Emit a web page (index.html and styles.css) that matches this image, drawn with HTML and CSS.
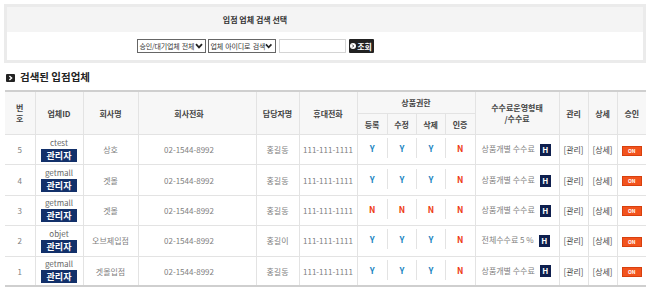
FILE: index.html
```html
<!DOCTYPE html>
<html>
<head>
    <meta charset="utf-8">
    <link rel="stylesheet" href="styles.css">
</head>
<body>
    <div class="search-box">
        <div class="search-head">입점 업체 검색 선택</div>
        <div class="search-body">
            <div class="select sel-state">
                <span>승인/대기업체 전체</span>
                <svg width="8" height="6" viewBox="0 0 8 6"><path d="M1 1.2 L4 4.4 L7 1.2" fill="none" stroke="#222" stroke-width="1.8"/></svg>
            </div>
            <div class="select sel-field">
                <span>업체 아이디로 검색</span>
                <svg width="8" height="6" viewBox="0 0 8 6"><path d="M1 1.2 L4 4.4 L7 1.2" fill="none" stroke="#222" stroke-width="1.8"/></svg>
            </div>
            <div class="keyword"></div>
            <div class="btn-search">
                <svg width="6" height="6" viewBox="0 0 6 6"><circle cx="3" cy="3" r="3" fill="#fff"/><path d="M2.3 1.6 L3.7 3 L2.3 4.4" fill="none" stroke="#222" stroke-width="0.9"/></svg>
                <span>조회</span>
            </div>
        </div>
    </div>

    <div class="list-title">
        <svg width="9" height="8" viewBox="0 0 9 8"><rect width="9" height="8" rx="1" fill="#222"/><path d="M3.4 2 L5.6 4 L3.4 6" fill="none" stroke="#fff" stroke-width="1.4"/></svg>
        <span>검색된 입점업체</span>
    </div>

    <table class="list">
        <colgroup>
            <col style="width:30px"><col style="width:48px"><col style="width:55px"><col style="width:118px">
            <col style="width:43px"><col style="width:58px"><col style="width:30px"><col style="width:29px">
            <col style="width:29px"><col style="width:30px"><col style="width:84px"><col style="width:29px">
            <col style="width:29px"><col style="width:29px">
        </colgroup>
        <thead>
            <tr class="head-top">
                <th rowspan="2">번<br>호</th>
                <th rowspan="2">업체ID</th>
                <th rowspan="2">회사명</th>
                <th rowspan="2" class="tel">회사전화</th>
                <th rowspan="2">담당자명</th>
                <th rowspan="2">휴대전화</th>
                <th colspan="4">상품권한</th>
                <th rowspan="2">수수료운영형태<br>/수수료</th>
                <th rowspan="2">관리</th>
                <th rowspan="2">상세</th>
                <th rowspan="2">승인</th>
            </tr>
            <tr class="head-sub">
                <th>등록</th>
                <th>수정</th>
                <th>삭제</th>
                <th>인증</th>
            </tr>
        </thead>
        <tbody>
            <tr>
                <td>5</td>
                <td class="vendor"><div class="vid">ctest</div><div class="badge-admin">관리자</div></td>
                <td>상호</td>
                <td class="tel">02-1544-8992</td>
                <td>홍길동</td>
                <td>111-111-1111</td>
                <td class="perm first"><span class="y">Y</span></td>
                <td class="perm"><span class="y">Y</span></td>
                <td class="perm"><span class="y">Y</span></td>
                <td class="perm"><span class="n">N</span></td>
                <td class="fee"><span>상품개별 수수료</span><b class="badge-h">H</b></td>
                <td class="link">[관리]</td>
                <td class="link">[상세]</td>
                <td><span class="btn-on">ON</span></td>
            </tr>
            <tr>
                <td>4</td>
                <td class="vendor"><div class="vid">getmall</div><div class="badge-admin">관리자</div></td>
                <td>겟몰</td>
                <td class="tel">02-1544-8992</td>
                <td>홍길동</td>
                <td>111-111-1111</td>
                <td class="perm first"><span class="y">Y</span></td>
                <td class="perm"><span class="y">Y</span></td>
                <td class="perm"><span class="y">Y</span></td>
                <td class="perm"><span class="n">N</span></td>
                <td class="fee"><span>상품개별 수수료</span><b class="badge-h">H</b></td>
                <td class="link">[관리]</td>
                <td class="link">[상세]</td>
                <td><span class="btn-on">ON</span></td>
            </tr>
            <tr>
                <td>3</td>
                <td class="vendor"><div class="vid">getmall</div><div class="badge-admin">관리자</div></td>
                <td>겟몰</td>
                <td class="tel">02-1544-8992</td>
                <td>홍길동</td>
                <td>111-111-1111</td>
                <td class="perm first"><span class="n">N</span></td>
                <td class="perm"><span class="n">N</span></td>
                <td class="perm"><span class="n">N</span></td>
                <td class="perm"><span class="n">N</span></td>
                <td class="fee"><span>상품개별 수수료</span><b class="badge-h">H</b></td>
                <td class="link">[관리]</td>
                <td class="link">[상세]</td>
                <td><span class="btn-on">ON</span></td>
            </tr>
            <tr>
                <td>2</td>
                <td class="vendor"><div class="vid">objet</div><div class="badge-admin">관리자</div></td>
                <td>오브제입점</td>
                <td class="tel">02-1544-8992</td>
                <td>홍길이</td>
                <td>111-111-1111</td>
                <td class="perm first"><span class="y">Y</span></td>
                <td class="perm"><span class="y">Y</span></td>
                <td class="perm"><span class="y">Y</span></td>
                <td class="perm"><span class="n">N</span></td>
                <td class="fee"><span>전체수수료 5 %</span><b class="badge-h">H</b></td>
                <td class="link">[관리]</td>
                <td class="link">[상세]</td>
                <td><span class="btn-on">ON</span></td>
            </tr>
            <tr>
                <td>1</td>
                <td class="vendor"><div class="vid">getmall</div><div class="badge-admin">관리자</div></td>
                <td>겟몰입점</td>
                <td class="tel">02-1544-8992</td>
                <td>홍길동</td>
                <td>111-111-1111</td>
                <td class="perm first"><span class="y">Y</span></td>
                <td class="perm"><span class="y">Y</span></td>
                <td class="perm"><span class="y">Y</span></td>
                <td class="perm"><span class="n">N</span></td>
                <td class="fee"><span>상품개별 수수료</span><b class="badge-h">H</b></td>
                <td class="link">[관리]</td>
                <td class="link">[상세]</td>
                <td><span class="btn-on">ON</span></td>
            </tr>
        </tbody>
    </table>
</body>
</html>
```

FILE: styles.css
```css
body {
    margin: 0;
    padding: 4px 4px 0 4px;
    background: #fff;
    color: #777;
    font-family: "Noto Sans CJK KR", "Noto Sans", sans-serif;
}

/* search box */
.search-box {
    border: 3px solid #ebebeb;
}

.search-head {
    height: 25px;
    padding-right: 140px;
    background: #f4f4f4;
    display: flex;
    align-items: center;
    justify-content: center;
    font-size: 8px;
    font-weight: bold;
    color: #333;
}

.search-body {
    height: 28px;
    padding-right: 140px;
    background: #fff;
    display: flex;
    align-items: center;
    justify-content: center;
}

.select {
    box-sizing: border-box;
    height: 14px;
    border: 1px solid #666;
    padding: 0 2px 0 2px;
    display: flex;
    align-items: center;
    justify-content: space-between;
    font-size: 7px;
    letter-spacing: -0.2px;
    word-spacing: 1px;
    color: #333;
    background: #fff;
    white-space: nowrap;
}

.sel-state { width: 69px; }
.sel-field { width: 68px; margin-left: 2px; }

.keyword {
    box-sizing: border-box;
    width: 67px;
    height: 14px;
    margin-left: 3px;
    border: 1px solid #d4d4d4;
}

.btn-search {
    width: 25px;
    height: 14px;
    margin-left: 3px;
    background: #222;
    border-radius: 1px;
    display: flex;
    align-items: center;
    justify-content: center;
    gap: 1px;
    font-size: 8px;
    font-weight: bold;
    color: #fff;
}

/* list title */
.list-title {
    height: 27px;
    padding-left: 2px;
    display: flex;
    align-items: center;
    gap: 5px;
    font-size: 10.5px;
    font-weight: bold;
    color: #222;
}

.list-title svg {
    margin-top: 2px;
}

/* list table */
.list {
    width: 641px;
    margin-left: 1px;
    table-layout: fixed;
    border-collapse: collapse;
    border-top: 2px solid #cfcfcf;
    border-bottom: 2px solid #cfcfcf;
    font-size: 8px;
    text-align: center;
}

.list th {
    background: #f7f7f7;
    color: #444;
    font-weight: bold;
    font-size: 8px;
    line-height: 11px;
    padding: 0;
    border: 1px solid #e3e3e3;
    border-top: 0;
}

.list th:first-child,
.list td:first-child { border-left: 0; }

.list th:last-child,
.list td:last-child { border-right: 0; }

.head-top th { height: 21px; }
.head-sub th { height: 20px; }

.list tbody tr { height: 30.4px; }

.list td {
    padding: 0;
    border: 1px solid #e3e3e3;
    color: #808080;
}

.list .tel { padding-right: 16px; }

.vendor .vid {
    font-size: 8px;
    line-height: 10px;
    color: #666;
}

.badge-admin {
    width: 36px;
    height: 13px;
    margin: 1px auto 0;
    background: #12306a;
    color: #fff;
    font-size: 9px;
    font-weight: bold;
    line-height: 13px;
}

.list td.perm {
    border-left: 0;
    border-right: 0;
}

.list td.perm span {
    display: block;
    height: 20px;
    line-height: 20px;
    margin-bottom: 3px;
    border-left: 1px solid #e3e3e3;
    font-weight: bold;
    font-size: 8.5px;
}

.list td.perm.first span { border-left: 0; }

.list td.first { border-left: 1px solid #e3e3e3; }

.y { color: #1d86c2; }
.n { color: #ee3a12; }

.list td.fee {
    border-left: 1px solid #e3e3e3;
    text-align: left;
    padding-left: 6px;
    white-space: nowrap;
}

.badge-h {
    display: inline-block;
    width: 11px;
    height: 12px;
    margin-left: 5px;
    background: #0e1f4e;
    color: #fff;
    font-size: 8px;
    line-height: 12px;
    text-align: center;
    vertical-align: middle;
}

.list td.link { color: #444; }

.btn-on {
    display: inline-block;
    box-sizing: border-box;
    width: 20px;
    height: 10px;
    background: #f2531d;
    border: 1px solid #d8400e;
    color: #fff;
    font-size: 5px;
    font-weight: bold;
    line-height: 8px;
    vertical-align: middle;
}
```
